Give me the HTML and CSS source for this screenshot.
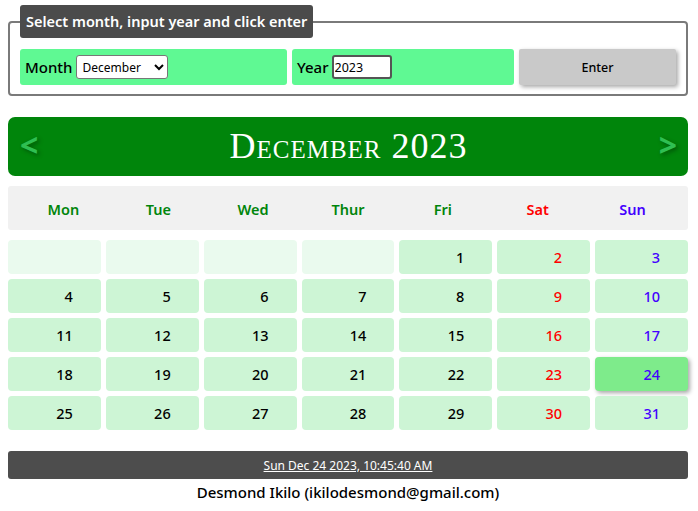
FILE: index.html
```html
<!DOCTYPE html>
<html>
<head>
<meta charset="utf-8">
<link rel="stylesheet" href="styles.css">
</head>
<body>
<div class="page">
  <fieldset class="controls">
    <legend class="legend">Select month, input year and click enter</legend>
    <div class="control-row">
      <div class="field">
        <label class="field-label">Month</label>
        <select class="month-select">
          <option>December</option>
        </select>
      </div>
      <div class="field">
        <label class="field-label">Year</label>
        <input class="year-input" type="text" value="2023">
      </div>
      <button class="enter-btn">Enter</button>
    </div>
  </fieldset>

  <div class="header">
    <span class="arrow">&lt;</span>
    <h1 class="title">December 2023</h1>
    <span class="arrow">&gt;</span>
  </div>

  <div class="weekdays">
    <div class="wd">Mon</div>
    <div class="wd">Tue</div>
    <div class="wd">Wed</div>
    <div class="wd">Thur</div>
    <div class="wd">Fri</div>
    <div class="wd sat">Sat</div>
    <div class="wd sun">Sun</div>
  </div>

  <div class="days">
    <div class="day empty"></div>
    <div class="day empty"></div>
    <div class="day empty"></div>
    <div class="day empty"></div>
    <div class="day">1</div>
    <div class="day sat">2</div>
    <div class="day sun">3</div>
    <div class="day">4</div>
    <div class="day">5</div>
    <div class="day">6</div>
    <div class="day">7</div>
    <div class="day">8</div>
    <div class="day sat">9</div>
    <div class="day sun">10</div>
    <div class="day">11</div>
    <div class="day">12</div>
    <div class="day">13</div>
    <div class="day">14</div>
    <div class="day">15</div>
    <div class="day sat">16</div>
    <div class="day sun">17</div>
    <div class="day">18</div>
    <div class="day">19</div>
    <div class="day">20</div>
    <div class="day">21</div>
    <div class="day">22</div>
    <div class="day sat">23</div>
    <div class="day sun today">24</div>
    <div class="day">25</div>
    <div class="day">26</div>
    <div class="day">27</div>
    <div class="day">28</div>
    <div class="day">29</div>
    <div class="day sat">30</div>
    <div class="day sun">31</div>
  </div>

  <div class="clock"><a class="clock-link" href="#">Sun Dec 24 2023, 10:45:40 AM</a></div>
  <div class="author">Desmond Ikilo (ikilodesmond@gmail.com)</div>
</div>
</body>
</html>
```

FILE: styles.css
```css
* { box-sizing: border-box; }
html, body { margin: 0; padding: 0; background: #fff; }
body { font-family: "Noto Sans", "Open Sans", sans-serif; color: #000; }
.page { padding: 5px 8px 0 8px; width: 696px; }

.controls {
  margin: 0;
  border: 2px solid #7a7a7a;
  border-radius: 4px;
  padding: 11px 10px 9px 10px;
  min-width: 0;
}
.legend {
  background: #4b4b4b;
  color: #fff;
  font-weight: 600;
  font-size: 14.5px;
  line-height: 21px;
  padding: 6px 6px;
  border-radius: 3px;
}
.control-row {
  display: grid;
  grid-template-columns: 267px 222px 157px;
  gap: 5px;
  height: 36px;
}
.field {
  background: #5ff993;
  border-radius: 3px;
  display: flex;
  align-items: center;
  padding-left: 5px;
  gap: 3px;
}
.field-label { font-size: 15px; font-weight: 500; }
.month-select {
  font-family: "Noto Sans", sans-serif;
  font-size: 12px;
  height: 24px;
  width: 92px;
  border: 1px solid #777;
  border-radius: 3px;
  background: #fff;
  padding: 0 2px;
}
.year-input {
  font-family: "Noto Sans", sans-serif;
  font-size: 12.5px;
  height: 24px;
  width: 60px;
  border: 2px solid #555;
  border-radius: 3px;
  padding: 0 1px;
}
.enter-btn {
  background: #c9c9c9;
  border: none;
  border-radius: 2px;
  box-shadow: 2px 2px 4px rgba(0,0,0,0.35);
  font-family: "Noto Sans", sans-serif;
  font-size: 12.5px;
  font-weight: 500;
  color: #000;
}

.header {
  margin-top: 21px;
  height: 59px;
  background: #00850b;
  border-radius: 7px;
  display: flex;
  align-items: center;
  justify-content: space-between;
  padding: 0 11px 0 12px;
}
.arrow {
  color: #2fbf52;
  font-size: 32px;
  font-weight: 700;
  font-family: "Noto Sans", sans-serif;
  text-shadow: 2px 2px 4px rgba(0,0,0,0.35);
  line-height: 1;
  margin-top: -4px;
}
.title {
  margin: 0;
  color: #fff;
  font-family: "Liberation Serif", "DejaVu Serif", serif;
  font-variant: small-caps;
  font-weight: 400;
  font-size: 36px;
  letter-spacing: 1px;
  margin-top: -2px;
}

.weekdays {
  margin-top: 10px;
  height: 44px;
  background: #f1f1f1;
  border-radius: 3px;
  display: grid;
  grid-template-columns: repeat(7, 1fr);
  align-items: center;
  text-align: center;
  padding: 2px 8px 0 8px;
}
.wd { font-size: 14.5px; font-weight: 600; color: #00850b; }
.wd.sat { color: #ff0000; }
.wd.sun { color: #4400ff; }

.days {
  margin-top: 10px;
  display: grid;
  grid-template-columns: repeat(7, 1fr);
  grid-auto-rows: 34px;
  gap: 5px 5px;
}
.day {
  background: #cdf5d5;
  border-radius: 4px;
  display: flex;
  align-items: center;
  justify-content: flex-end;
  padding-right: 28px;
  font-size: 14.5px;
  font-weight: 500;
  color: #000;
}
.day.empty { background: #eafaee; }
.day.sat { color: #ff0000; }
.day.sun { color: #4400ff; }
.day.today {
  background: #7eeb8b;
  box-shadow: 2px 2px 4px rgba(0,0,0,0.35);
}

.clock {
  margin-top: 21px;
  height: 28px;
  background: #4d4d4d;
  border-radius: 3px;
  display: flex;
  align-items: center;
  justify-content: center;
}
.clock-link { color: #fff; font-size: 12px; text-decoration: underline; }
.author {
  text-align: center;
  font-size: 15px;
  font-weight: 500;
  margin-top: 3px;
}
```
